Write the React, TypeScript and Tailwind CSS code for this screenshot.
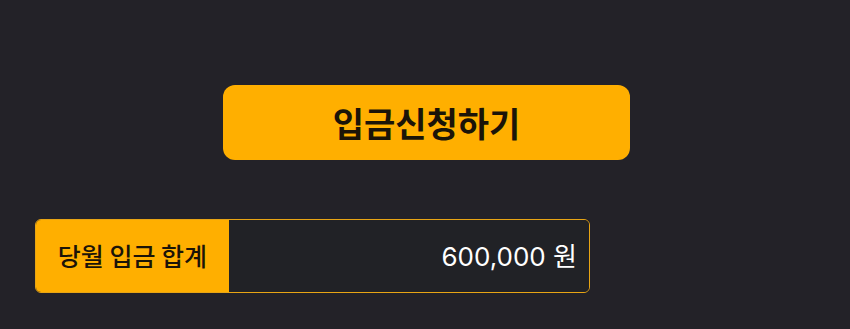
import React from "react";

export default function App() {
  return (
    <div
      className="h-[329px] w-[850px] bg-[#232228] pt-[85px] pl-[35px]"
      style={{ fontFamily: '"Noto Sans CJK KR", "Noto Sans", sans-serif' }}
    >
      {/* Deposit request button */}
      <button className="ml-[188px] flex h-[75px] w-[407px] items-center justify-center rounded-[12px] bg-[#ffaf00] text-[34px] font-semibold text-[#1b1408]">
        입금신청하기
      </button>

      {/* Monthly total */}
      <div className="mt-[59px] flex h-[74px] w-[555px] overflow-hidden rounded-[6px] border border-[#e8a514]">
        <div className="flex w-[193px] items-center justify-center bg-[#ffaf00] text-[25px] font-medium text-[#1b1408]">
          당월 입금 합계
        </div>
        <div className="flex flex-1 items-center justify-end bg-[#212226] pr-[12px] text-[26px] text-white [font-family:Inter,'Noto_Sans_CJK_KR',sans-serif]">
          600,000 원
        </div>
      </div>
    </div>
  );
}
